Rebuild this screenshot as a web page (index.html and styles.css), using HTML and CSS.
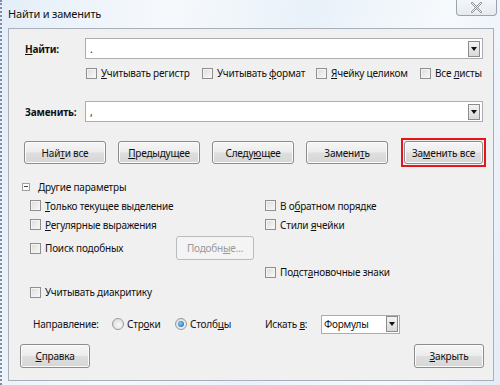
FILE: index.html
```html
<!DOCTYPE html>
<html lang="ru">
<head>
    <meta charset="UTF-8">
    <title>Найти и заменить</title>
    <link rel="stylesheet" href="styles.css">
</head>
<body>

    <div class="window">
        <div class="titlebar">
            <span class="title">Найти и заменить</span>
            <div class="close-btn">
                <svg width="13" height="11" viewBox="0 0 13 11">
                    <path d="M2 1 L11 10 M11 1 L2 10" stroke="#fff" stroke-width="4" stroke-linecap="round"/>
                    <path d="M2 1 L11 10 M11 1 L2 10" stroke="#8a8f96" stroke-width="2.4" stroke-linecap="round"/>
                    <path d="M2 1 L11 10 M11 1 L2 10" stroke="#f4f6f8" stroke-width="1" stroke-linecap="round"/>
                </svg>
            </div>
        </div>

        <div class="client">
            <!-- Найти -->
            <div class="field-row">
                <label class="field-label"><u>Н</u>айти:</label>
                <div class="combo">
                    <span class="combo-text">.</span>
                    <span class="combo-arrow"></span>
                </div>
            </div>

            <div class="check-row">
                <span class="check w-reg"><i class="box"></i><span><u>У</u>читывать регистр</span></span>
                <span class="check w-fmt"><i class="box"></i><span>Учитывать <u>ф</u>ормат</span></span>
                <span class="check w-cell"><i class="box"></i><span><u>Я</u>чейку целиком</span></span>
                <span class="check"><i class="box"></i><span>Все <u>л</u>исты</span></span>
            </div>

            <!-- Заменить -->
            <div class="field-row replace-row">
                <label class="field-label">Заменить:</label>
                <div class="combo">
                    <span class="combo-text">,</span>
                    <span class="combo-arrow"></span>
                </div>
            </div>

            <div class="button-row">
                <button class="btn">Най<u>т</u>и все</button>
                <button class="btn"><u>П</u>редыдущее</button>
                <button class="btn">Следу<u>ю</u>щее</button>
                <button class="btn">Замени<u>т</u>ь</button>
                <span class="highlight"><button class="btn">За<u>м</u>енить все</button></span>
            </div>

            <div class="section-head">
                <i class="collapse"></i><span>Другие параметры</span>
            </div>

            <div class="options">
                <span class="check opt-a1"><i class="box"></i><span><u>Т</u>олько текущее выделение</span></span>
                <span class="check opt-b1"><i class="box"></i><span>В о<u>б</u>ратном порядке</span></span>
                <span class="check opt-a2"><i class="box"></i><span><u>Р</u>егулярные выражения</span></span>
                <span class="check opt-b2"><i class="box"></i><span>Стили <u>я</u>чейки</span></span>
                <span class="check opt-a3"><i class="box"></i><span class="similar-label">Поиск подобных</span>
                    <button class="btn btn-disabled">Подобн<u>ы</u>е...</button>
                </span>
                <span class="check opt-b4"><i class="box"></i><span>Подст<u>а</u>новочные знаки</span></span>
                <span class="check opt-a5"><i class="box"></i><span>Учитывать диакритику</span></span>
            </div>

            <div class="direction-row">
                <span class="dir-label">Направление:</span>
                <span class="radio r-rows"><i class="dot"></i><span>Стр<u>о</u>ки</span></span>
                <span class="radio r-cols"><i class="dot checked"></i><span>Столб<u>ц</u>ы</span></span>
                <span class="look-label">Искать <u>в</u>:</span>
                <div class="select">
                    <span class="select-text">Формулы</span>
                    <span class="combo-arrow"></span>
                </div>
            </div>

            <div class="footer-row">
                <button class="btn btn-foot"><u>С</u>правка</button>
                <button class="btn btn-foot"><u>З</u>акрыть</button>
            </div>
        </div>
    </div>

</body>
</html>
```

FILE: styles.css
```css
body {
    margin: 0;
    width: 500px;
    height: 385px;
    overflow: hidden;
    font-family: "Noto Sans", "Open Sans", sans-serif;
    font-size: 10px;
    letter-spacing: -0.2px;
    color: #111;
    background: linear-gradient(100deg, #e4eef8 0%, #f6f9fc 30%, #e9f1f9 55%, #f7fafd 80%, #e3edf7 100%);
}

u {
    text-decoration: underline;
    text-underline-offset: 1px;
}

.window {
    height: 385px;
    border-left: 2px dotted #7f8ea3;
    box-sizing: border-box;
}

/* Title bar */
.titlebar {
    position: relative;
    height: 28px;
}

.title {
    display: block;
    padding: 6px 0 0 6px;
    font-size: 11px;
    color: #111;
}

.close-btn {
    position: absolute;
    top: -1px;
    right: 3px;
    width: 39px;
    height: 16px;
    border: 1px solid #9aa4b0;
    border-top: none;
    border-radius: 0 0 4px 4px;
    background: linear-gradient(#f4f7fa, #e6ebf1);
    display: flex;
    align-items: center;
    justify-content: center;
}

/* Client area */
.client {
    margin-left: 6px;
    width: 486px;
    height: 353px;
    box-sizing: border-box;
    background: #f0f0f0;
    border: 1px solid #a7b0ba;
    padding: 9px 0 0 16px;
}

.field-row {
    display: flex;
    align-items: center;
    height: 21px;
}

.replace-row {
    margin-top: 20px;
}

.field-label {
    width: 60px;
    font-weight: bold;
}

.combo {
    width: 398px;
    height: 21px;
    box-sizing: border-box;
    background: #fff;
    border: 1px solid #abadb3;
    display: flex;
    align-items: center;
    justify-content: space-between;
    padding: 0 2px 0 4px;
}

.combo-arrow {
    width: 12px;
    height: 16px;
    box-sizing: border-box;
    border: 1px solid #8c8c8c;
    background: linear-gradient(#f3f3f3, #d9d9d9);
    position: relative;
}

.combo-arrow::after {
    content: "";
    position: absolute;
    left: 2px;
    top: 5px;
    border-left: 3px solid transparent;
    border-right: 3px solid transparent;
    border-top: 4px solid #111;
}

/* Checkboxes */
.check-row {
    display: flex;
    margin: 6px 0 0 61px;
    height: 16px;
    align-items: center;
}

.check {
    display: flex;
    align-items: center;
    white-space: nowrap;
}

.w-reg { width: 116px; }
.w-fmt { width: 114px; }
.w-cell { width: 104px; }

.box {
    display: inline-block;
    flex: none;
    width: 11px;
    height: 11px;
    box-sizing: border-box;
    border: 1px solid #8e8f8f;
    background: linear-gradient(135deg, #dcdcdc, #f9f9f9);
    box-shadow: inset 0 0 0 1px #f4f4f4;
    margin-right: 4px;
}

/* Buttons */
.button-row {
    display: flex;
    align-items: center;
    gap: 12px;
    margin: 16px 0 0 -1px;
}

.btn {
    width: 82px;
    height: 23px;
    padding: 0;
    font-family: inherit;
    font-size: 10px;
    letter-spacing: -0.2px;
    color: #111;
    border: 1px solid #8c8c8c;
    border-radius: 3px;
    background: linear-gradient(#f6f6f6 0%, #ececec 48%, #dedede 52%, #d6d6d6 100%);
    box-shadow: inset 0 0 0 1px #fbfbfb;
}

.highlight {
    margin-left: 1px;
    padding: 1px;
    border: 2px solid #e5151c;
    display: flex;
}

.highlight .btn {
    width: 79px;
}

/* Other options */
.section-head {
    display: flex;
    align-items: center;
    margin: 10px 0 0 -3px;
    height: 19px;
}

.collapse {
    width: 8px;
    height: 8px;
    box-sizing: border-box;
    border: 1px solid #a0a0a0;
    background: #fcfcfc;
    position: relative;
    margin-right: 8px;
}

.collapse::after {
    content: "";
    position: absolute;
    left: 1px;
    top: 2px;
    width: 4px;
    height: 1px;
    background: #444;
}

.options {
    display: grid;
    grid-template-columns: 235px auto;
    grid-template-rows: 19px 19px 28px 20px 20px;
    align-items: center;
    margin-left: 5px;
}

.opt-a1 { grid-area: 1 / 1; }
.opt-b1 { grid-area: 1 / 2; }
.opt-a2 { grid-area: 2 / 1; }
.opt-b2 { grid-area: 2 / 2; }
.opt-a3 { grid-area: 3 / 1; }
.opt-b4 { grid-area: 4 / 2; }
.opt-a5 { grid-area: 5 / 1; }

.similar-label {
    width: 131px;
}

.btn-disabled {
    width: 78px;
    height: 24px;
    color: #9a9a9a;
    border-color: #b9bcbf;
    background: #f4f4f4;
    box-shadow: none;
}

/* Direction */
.direction-row {
    display: flex;
    align-items: center;
    height: 20px;
    margin: 12px 0 0 8px;
}

.dir-label {
    width: 79px;
}

.radio {
    display: flex;
    align-items: center;
}

.r-rows { width: 63px; }
.r-cols { width: 90px; }

.dot {
    width: 12px;
    height: 12px;
    box-sizing: border-box;
    border-radius: 50%;
    border: 1px solid #9a9a9a;
    background: radial-gradient(circle at 60% 60%, #f8f8f8, #d6d6d6);
    margin-right: 3px;
    position: relative;
}

.dot.checked::after {
    content: "";
    position: absolute;
    left: 2px;
    top: 2px;
    width: 6px;
    height: 6px;
    border-radius: 50%;
    background: radial-gradient(circle at 40% 40%, #7fd0ff, #0b5aa8);
}

.look-label {
    width: 56px;
}

.select {
    width: 79px;
    height: 19px;
    box-sizing: border-box;
    background: #fff;
    border: 1px solid #abadb3;
    display: flex;
    align-items: center;
    justify-content: space-between;
    padding: 0 1px 0 2px;
}

/* Footer */
.footer-row {
    display: flex;
    justify-content: space-between;
    margin: 10px 0 0 -5px;
    width: 464px;
}

.btn-foot {
    width: 70px;
    height: 24px;
}
```
